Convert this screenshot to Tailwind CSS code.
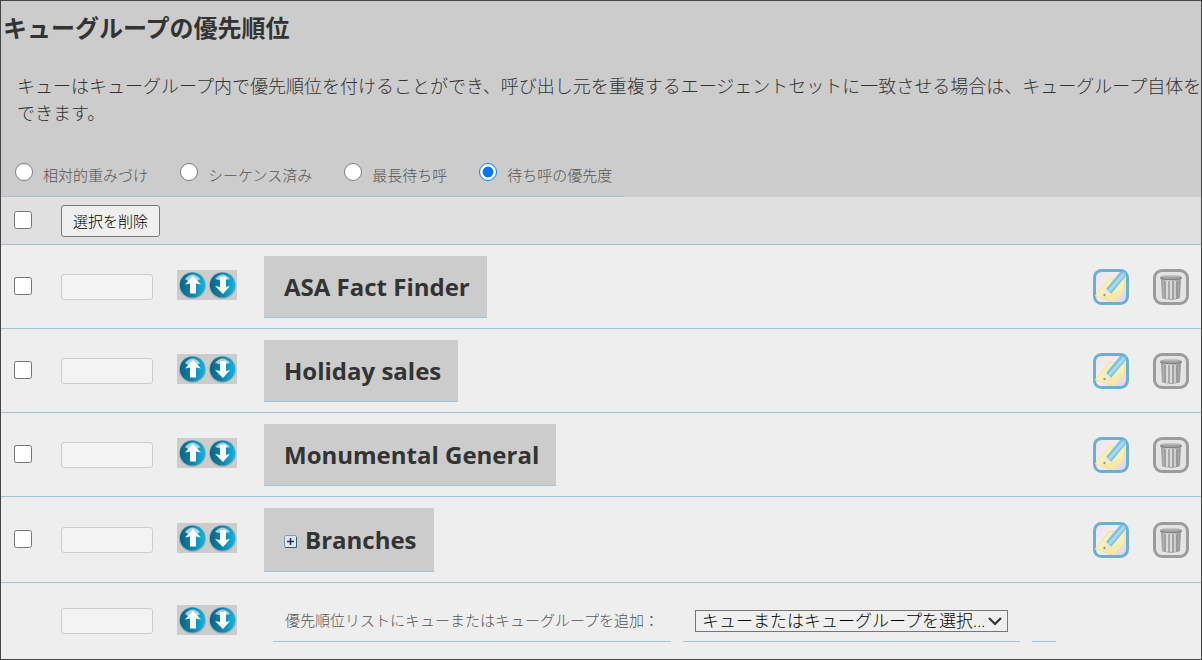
<!DOCTYPE html>
<html lang="ja">

<head>
    <meta charset="UTF-8">
    <meta name="viewport" content="width=device-width, initial-scale=1.0">
    <title>キューグループの優先順位</title>
    <script src="https://cdn.jsdelivr.net/npm/@tailwindcss/browser@4"></script>
</head>

<body class="relative min-h-screen flex flex-col border border-[#444] bg-[#eee] overflow-hidden text-[#333] font-['Open_Sans','Noto_Sans_CJK_JP',sans-serif]">

    <!-- shared icons -->
    <svg class="absolute size-0" aria-hidden="true">
        <defs>
            <linearGradient id="ball" x1="0" x2="1">
                <stop offset="0" stop-color="#0a6283" />
                <stop offset="0.5" stop-color="#0e86ad" />
                <stop offset="1" stop-color="#12b4e2" />
            </linearGradient>
            <linearGradient id="paper" x1="0" y1="0" x2="1" y2="1">
                <stop offset="0" stop-color="#e8e2e8" />
                <stop offset="0.5" stop-color="#f6eef0" />
                <stop offset="1" stop-color="#d8d0e4" />
            </linearGradient>
            <linearGradient id="metal" x1="0" x2="1">
                <stop offset="0" stop-color="#a4a4a4" />
                <stop offset="0.4" stop-color="#dcdcdc" />
                <stop offset="1" stop-color="#989898" />
            </linearGradient>
        </defs>
        <symbol id="up" viewBox="0 0 30 30">
            <circle cx="15.5" cy="15.5" r="13.6" fill="#8aa0a8" opacity="0.6" />
            <circle cx="15.5" cy="15" r="12.6" fill="url(#ball)" />
            <path d="M8 9Q15.5 0 23 9L20 11H11Z" fill="#fff" opacity="0.65" />
            <path d="M16 6L24 14.5L19 13.5V23.5H13V13.5L8 14.5Z" fill="#fff" />
        </symbol>
        <symbol id="down" viewBox="0 0 30 30">
            <circle cx="15.5" cy="15.5" r="13.6" fill="#8aa0a8" opacity="0.6" />
            <circle cx="15.5" cy="15" r="12.6" fill="url(#ball)" />
            <path d="M8 9Q15.5 0 23 9L19 10H12Z" fill="#fff" opacity="0.65" />
            <path d="M13 7H19V17L23 16L16 24L8 16L13 17Z" fill="#fff" />
        </symbol>
        <symbol id="edit" viewBox="0 0 36 36">
            <rect x="1.5" y="1.5" width="33" height="33" rx="7" fill="url(#paper)" stroke="#68b0d4" stroke-width="3" />
            <path d="M2 27L17 9L32 11L31 22L21 33Z" fill="#faf0b4" stroke="#ecdc9c" stroke-width="0.8" />
            <path d="M9 28.5L31 20L21 33Z" fill="#f2e2a4" opacity="0.6" />
            <path d="M13 20L27 3H33V7L18 25Z" fill="#7cc2e2" />
            <path d="M15 21L30 4L32 6L17 23Z" fill="#a8daf0" />
            <path d="M11 26.500L13 20L18 25Z" fill="#ece8dc" />
            <circle cx="11.5" cy="26" r="1.2" fill="#999" />
        </symbol>
        <symbol id="trash" viewBox="0 0 36 36">
            <rect x="1.5" y="1.5" width="33" height="33" rx="7.500" fill="#e4e4e4" stroke="#9c9c9c" stroke-width="3" />
            <path d="M8.5 10H27.500L26.500 29Q18 32 9.500 29Z" fill="url(#metal)" stroke="#949494" stroke-width="0.8" />
            <path d="M12 12V29M16 12V30M20 12V30M24 12V29" stroke="#8c8c8c" stroke-width="1.2" />
            <path d="M14 12V30M18 12V30M22 12V30" stroke="#e4e4e4" stroke-width="1" />
            <ellipse cx="18" cy="8.5" rx="11" ry="2.6" fill="#a4a4a4" />
            <path d="M7 9Q18 12.500 29 9" fill="none" stroke="#7c7c7c" />
            <path d="M10 7.5Q18 4 26 7.5" fill="#c8c8c8" />
        </symbol>
    </svg>

    <header class="bg-[#ccc]">
        <h1 class="pt-[7px] pl-0.5 text-2xl leading-10 font-bold whitespace-nowrap">キューグループの優先順位</h1>
        <p class="pt-[25px] pl-4 text-lg leading-[27px] font-light whitespace-nowrap">キューはキューグループ内で優先順位を付けることができ、呼び出し元を重複するエージェントセットに一致させる場合は、キューグループ自体を<br>できます。</p>

        <form class="mt-7 w-fit h-[42px] pl-3.5 pr-3 flex gap-8 border-b border-[#a0c4d8] text-[15px] leading-6 font-light text-[#555]">
            <label class="flex items-start gap-2.5 pt-2"><input type="radio" name="mode" class="size-[18px]"><span>相対的重みづけ</span></label>
            <label class="flex items-start gap-2.5 pt-2"><input type="radio" name="mode" class="size-[18px]"><span>シーケンス済み</span></label>
            <label class="flex items-start gap-2.5 pt-2"><input type="radio" name="mode" class="size-[18px]"><span>最長待ち呼</span></label>
            <label class="flex items-start gap-2.5 pt-2"><input type="radio" name="mode" class="size-[18px]" checked><span>待ち呼の優先度</span></label>
        </form>
    </header>

    <table class="w-full table-fixed border-separate border-spacing-0">
        <colgroup>
            <col class="w-[60px]">
            <col class="w-[116px]">
            <col class="w-[87px]">
            <col>
            <col class="w-[60px]">
            <col class="w-12">
        </colgroup>
        <thead>
            <tr class="h-12 bg-[#e0e0e0]">
                <td class="pl-[13px] pb-0.5 border-b border-[#a0c4d8]"><input type="checkbox" aria-label="すべて選択" class="block size-[18px]"></td>
                <td colspan="5" class="border-b border-[#a0c4d8]"><button type="button" class="block h-8 px-[11px] border border-[#777] rounded-[3px] bg-[#efefef] text-[15px] leading-7 font-light text-black">選択を削除</button></td>
            </tr>
        </thead>
        <tbody id="queues"></tbody>
        <tfoot>
            <tr class="h-[76px]">
                <td></td>
                <td><input type="text" aria-label="優先度" class="block w-[92px] h-[26px] border border-[#ccc] rounded-[3px] bg-[#f3f3f3]"></td>
                <td class="pb-[3px]">
                    <div class="flex w-fit bg-[#ccc]">
                        <button type="button" aria-label="上へ" class="block"><svg class="size-[30px]"><use href="#up" /></svg></button>
                        <button type="button" aria-label="下へ" class="block"><svg class="size-[30px]"><use href="#down" /></svg></button>
                    </div>
                </td>
                <td colspan="3">
                    <div class="flex gap-3 pl-[9px]">
                        <label for="add" class="h-[42px] px-3 border-b border-[#a0c4d8] text-[15px] leading-10 font-light text-[#555] whitespace-nowrap">優先順位リストにキューまたはキューグループを追加：</label>
                        <div class="h-[42px] px-3 border-b border-[#a0c4d8] flex items-center">
                            <div class="relative">
                                <select id="add" class="block appearance-none w-[313px] h-[22px] pl-1.5 border border-[#767676] bg-[#efefef] text-[17px] leading-5 font-light text-black">
                                    <option>キューまたはキューグループを選択...</option>
                                </select>
                                <svg class="absolute right-1.5 top-1.5 w-3.5 h-2.5 pointer-events-none" viewBox="0 0 14 10" fill="none" stroke="#333" stroke-width="2.2"><path d="M1 2L7 8L13 2" /></svg>
                            </div>
                        </div>
                        <div class="w-6 h-[42px] border-b border-[#a0c4d8]"></div>
                    </div>
                </td>
            </tr>
        </tfoot>
    </table>

    <script>
        const queues = [
            { name: 'ASA Fact Finder' },
            { name: 'Holiday sales' },
            { name: 'Monumental General' },
            { name: 'Branches', group: true }
        ];

        const plus = `
            <button type="button" aria-label="展開" class="block mt-1">
                <svg class="size-[13px]" viewBox="0 0 13 13">
                    <rect x="0.5" y="0.5" width="12" height="12" rx="1.5" fill="#dfe8f4" stroke="#8098b8" />
                    <path d="M1 12.5H12.5V2" fill="none" stroke="#405880" />
                    <path d="M3 6.5H10M6.5 3V10" stroke="#203860" stroke-width="1.5" />
                </svg>
            </button>`;

        document.getElementById('queues').innerHTML = queues.map(queue => `
            <tr>
                <td class="pl-[13px] pb-0.5 border-b border-[#a0c4d8]"><input type="checkbox" aria-label="${queue.name}" class="block size-[18px]"></td>
                <td class="border-b border-[#a0c4d8]"><input type="text" aria-label="${queue.name} 優先度" class="block w-[92px] h-[26px] border border-[#ccc] rounded-[3px] bg-[#f3f3f3]"></td>
                <td class="pb-[3px] border-b border-[#a0c4d8]">
                    <div class="flex w-fit bg-[#ccc]">
                        <button type="button" aria-label="上へ" class="block"><svg class="size-[30px]"><use href="#up" /></svg></button>
                        <button type="button" aria-label="下へ" class="block"><svg class="size-[30px]"><use href="#down" /></svg></button>
                    </div>
                </td>
                <td class="pt-[11px] pb-2.5 border-b border-[#a0c4d8]">
                    <div class="${queue.group ? 'h-16' : 'h-[62px]'} w-fit pl-5 pr-[17px] flex items-center gap-2 bg-[#ccc] border-b border-[#a0c4d8] text-2xl font-bold">
                        ${queue.group ? plus : ''}<h2>${queue.name}</h2>
                    </div>
                </td>
                <td class="border-b border-[#a0c4d8]"><button type="button" aria-label="編集" class="block"><svg class="size-9"><use href="#edit" /></svg></button></td>
                <td class="border-b border-[#a0c4d8]"><button type="button" aria-label="削除" class="block"><svg class="size-9"><use href="#trash" /></svg></button></td>
            </tr>
        `).join('');
    </script>

</body>

</html>
